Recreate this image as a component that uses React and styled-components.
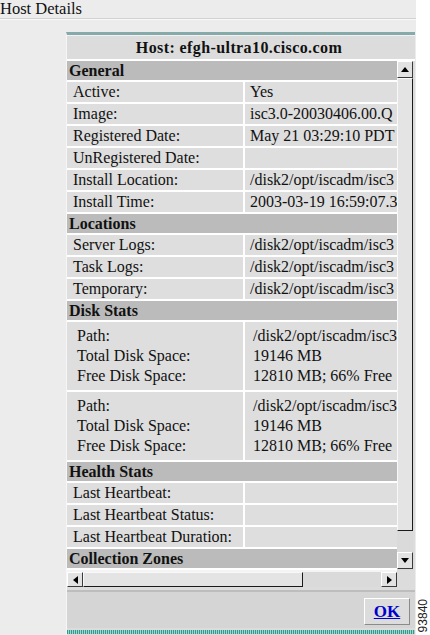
import React from 'react';
import styled, { createGlobalStyle } from 'styled-components';

const GlobalStyle = createGlobalStyle`
  html, body {
    margin: 0;
    padding: 0;
    background: #ffffff;
  }
  body {
    font-family: "Liberation Serif", "Times New Roman", serif;
    color: #111111;
  }
`;

// values are shown as far as the 330px viewport lets them be seen
const general = [
  ['Active:', 'Yes'],
  ['Image:', 'isc3.0-20030406.00.Q'],
  ['Registered Date:', 'May 21 03:29:10 PDT'],
  ['UnRegistered Date:', ''],
  ['Install Location:', '/disk2/opt/iscadm/isc3'],
  ['Install Time:', '2003-03-19 16:59:07.3'],
];

const locations = [
  ['Server Logs:', '/disk2/opt/iscadm/isc3'],
  ['Task Logs:', '/disk2/opt/iscadm/isc3'],
  ['Temporary:', '/disk2/opt/iscadm/isc3'],
];

const disks = [
  { path: '/disk2/opt/iscadm/isc3', total: '19146 MB', free: '12810 MB; 66% Free' },
  { path: '/disk2/opt/iscadm/isc3', total: '19146 MB', free: '12810 MB; 66% Free' },
];

const health = [
  ['Last Heartbeat:', ''],
  ['Last Heartbeat Status:', ''],
  ['Last Heartbeat Duration:', ''],
];

export default function App() {
  return (
    <Page>
      <GlobalStyle />
      <Main>
        <TopBar>Host Details</TopBar>
        <Body>
          <Panel>
            <Title>Host: efgh-ultra10.cisco.com</Title>
            <Scroller>
              <Viewport>
                <Grid>
                  <Section>General</Section>
                  {general.map(([k, v]) => (
                    <React.Fragment key={k}>
                      <Label>{k}</Label>
                      <Value>{v}</Value>
                    </React.Fragment>
                  ))}
                  <Section>Locations</Section>
                  {locations.map(([k, v]) => (
                    <React.Fragment key={k}>
                      <Label>{k}</Label>
                      <Value>{v}</Value>
                    </React.Fragment>
                  ))}
                  <Section>Disk Stats</Section>
                  {disks.map((d, i) => (
                    <React.Fragment key={i}>
                      <Label $block>
                        <span>Path:</span>
                        <span>Total Disk Space:</span>
                        <span>Free Disk Space:</span>
                      </Label>
                      <Value $block>
                        <span>{d.path}</span>
                        <span>{d.total}</span>
                        <span>{d.free}</span>
                      </Value>
                    </React.Fragment>
                  ))}
                  <Section>Health Stats</Section>
                  {health.map(([k, v]) => (
                    <React.Fragment key={k}>
                      <Label>{k}</Label>
                      <Value>{v}</Value>
                    </React.Fragment>
                  ))}
                  <Section>Collection Zones</Section>
                </Grid>
              </Viewport>
              <VScroll>
                <ArrowBtn $h={17}>
                  <svg width="8" height="5" viewBox="0 0 8 5"><polygon points="0,5 8,5 4,0" fill="#000" /></svg>
                </ArrowBtn>
                <VThumb />
                <Track />
                <ArrowBtn $h={17}>
                  <svg width="8" height="5" viewBox="0 0 8 5"><polygon points="0,0 8,0 4,5" fill="#000" /></svg>
                </ArrowBtn>
              </VScroll>
              <HScroll>
                <ArrowBtn $w={16}>
                  <svg width="5" height="8" viewBox="0 0 5 8"><polygon points="5,0 5,8 0,4" fill="#000" /></svg>
                </ArrowBtn>
                <HThumb />
                <Track />
                <ArrowBtn $w={16}>
                  <svg width="5" height="8" viewBox="0 0 5 8"><polygon points="0,0 0,8 5,4" fill="#000" /></svg>
                </ArrowBtn>
              </HScroll>
              <Corner />
            </Scroller>
            <Footer>
              <OkButton>OK</OkButton>
            </Footer>
            <TealBar />
          </Panel>
        </Body>
      </Main>
      <Side>
        <FigNumber>93840</FigNumber>
      </Side>
    </Page>
  );
}

const Page = styled.div`
  display: flex;
  width: 430px;
  height: 635px;
  overflow: hidden;
`;

const Main = styled.div`
  width: 416px;
  display: flex;
  flex-direction: column;
  background-color: #ececec;
`;

const TopBar = styled.div`
  height: 18px;
  font-size: 16.5px;
  line-height: 17px;
  border-bottom: 1px solid #d2d2d2;
  box-shadow: 0 1px 0 #f8f8f8;
`;

const Body = styled.div`
  flex: 1;
  display: flex;
  padding: 13px 1px 0 66px;
  min-height: 0;
`;

const Panel = styled.div`
  flex: 1;
  display: flex;
  flex-direction: column;
  background-color: #dcdcdc;
  border-top: 3px solid #86aaa9;
  border-left: 1px solid #f6f6f6;
`;

const Title = styled.div`
  height: 23px;
  border-top: 1px solid #f2f2f2;
  border-bottom: 2px solid #ffffff;
  text-align: center;
  font-weight: bold;
  font-size: 16px;
  line-height: 23px;
  letter-spacing: 0.4px;
  padding-right: 4px;
`;

const Scroller = styled.div`
  display: grid;
  grid-template-columns: 330px 16px;
  grid-template-rows: 509px 17px;
  padding-right: 2px;
`;

const Viewport = styled.div`
  overflow: hidden;
  background-color: #ffffff;
`;

const Grid = styled.div`
  display: grid;
  grid-template-columns: 176px 240px;
  gap: 2px;
  width: 418px;
`;

const Section = styled.div`
  grid-column: 1 / -1;
  height: 19px;
  line-height: 19px;
  background-color: #bbbbbb;
  font-weight: bold;
  font-size: 16px;
  padding-left: 2px;
  white-space: nowrap;
`;

const Cell = styled.div`
  background-color: #dedede;
  font-size: 16px;
  white-space: nowrap;
  overflow: hidden;
  display: flex;
  flex-direction: column;
  justify-content: center;
  height: ${(p) => (p.$block ? '68px' : '20px')};
  line-height: 20px;
  span { display: block; }
`;

const Label = styled(Cell)`
  padding-left: ${(p) => (p.$block ? '10px' : '6px')};
`;

const Value = styled(Cell)`
  padding-left: ${(p) => (p.$block ? '8px' : '5px')};
`;

const VScroll = styled.div`
  display: flex;
  flex-direction: column;
  background-color: #d8d8d8;
  padding-bottom: 1px;
`;

const HScroll = styled.div`
  display: flex;
  background-color: #d8d8d8;
  border-top: 2px solid #f4f4f4;
`;

const Corner = styled.div`
  background-color: #dcdcdc;
`;

const ArrowBtn = styled.div`
  flex: none;
  display: flex;
  align-items: center;
  justify-content: center;
  box-sizing: border-box;
  ${(p) => (p.$h ? `height: ${p.$h}px;` : '')}
  ${(p) => (p.$w ? `width: ${p.$w}px;` : '')}
  background-color: #e2e2e2;
  border-top: 1px solid #ffffff;
  border-left: 1px solid #ffffff;
  border-right: 1px solid #3a3a3a;
  border-bottom: 1px solid #3a3a3a;
`;

const VThumb = styled.div`
  height: 453px;
  flex: none;
  box-sizing: border-box;
  background-color: #e4e4e4;
  border-top: 1px solid #f8f8f8;
  border-left: 1px solid #f8f8f8;
  border-right: 1px solid #1a1a1a;
  border-bottom: 1px solid #1a1a1a;
`;

const HThumb = styled.div`
  width: 220px;
  flex: none;
  box-sizing: border-box;
  background-color: #e4e4e4;
  border-top: 1px solid #f8f8f8;
  border-left: 1px solid #f8f8f8;
  border-right: 1px solid #1a1a1a;
  border-bottom: 1px solid #1a1a1a;
`;

const Track = styled.div`
  flex: 1;
  background-color: #dadada;
`;

const Footer = styled.div`
  height: 38px;
  margin-top: 3px;
  border-top: 2px solid #bdbdbd;
  background-color: #d5d5d5;
  display: flex;
  justify-content: flex-end;
  align-items: flex-start;
  padding: 6px 5px 0 0;
  box-sizing: border-box;
`;

const OkButton = styled.button`
  width: 46px;
  height: 27px;
  padding: 0;
  background-color: #dcdcdc;
  border-top: 1px solid #ffffff;
  border-left: 1px solid #ffffff;
  border-right: 1px solid #8a8a8a;
  border-bottom: 1px solid #8a8a8a;
  font-family: "Liberation Serif", "Times New Roman", serif;
  font-weight: bold;
  font-size: 17px;
  color: #0000cc;
  text-decoration: underline;
`;

const TealBar = styled.div`
  height: 4px;
  margin-top: 2px;
  background: repeating-linear-gradient(90deg, #2f9b8e 0 1px, #a6d3cb 1px 2px);
`;

const Side = styled.div`
  flex: 1;
  display: flex;
  flex-direction: column;
  justify-content: flex-end;
  align-items: center;
  padding-bottom: 3px;
  background-color: #ffffff;
`;

const FigNumber = styled.div`
  writing-mode: vertical-rl;
  transform: rotate(180deg);
  font-family: "Liberation Sans", Arial, sans-serif;
  font-size: 12px;
  color: #222222;
  line-height: 12px;
`;
